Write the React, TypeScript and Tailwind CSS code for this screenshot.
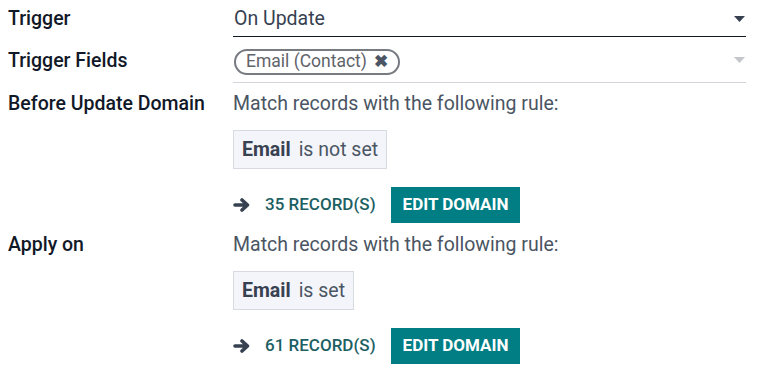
const Caret = ({ light }: { light?: boolean }) => (
  <svg width="11" height="6" viewBox="0 0 11 6" className="shrink-0">
    <path d="M0 0 L11 0 L5.5 6 Z" fill={light ? '#c4c6ca' : '#374151'} />
  </svg>
);

const BoldArrow = () => (
  <svg width="17" height="16" viewBox="0 0 17 16" className="shrink-0">
    <path
      d="M2 8 H14 M9 3 L14.5 8 L9 13"
      fill="none"
      stroke="#374151"
      strokeWidth="3.6"
      strokeLinecap="round"
      strokeLinejoin="round"
    />
  </svg>
);

const DomainBlock = ({ rule, records }: { rule: string; records: number }) => (
  <div className="flex flex-col">
    <div className="h-[28px] leading-[28px] text-[#4b5563]">Match records with the following rule:</div>
    <div className="mt-[12px] self-start flex items-center h-[39px] px-[8px] bg-[#f4f5fa] border border-[#d8dae2] text-[#4b5563]">
      <span className="font-bold text-[#374151]">Email</span>
      <span className="ml-[8px]">{rule}</span>
    </div>
    <div className="mt-[18px] flex items-center h-[36px]">
      <BoldArrow />
      <span className="ml-[15px] text-[17px] font-medium text-[#1d5f63]">{records} RECORD(S)</span>
      <button className="ml-[15px] h-[36px] px-[12px] bg-[#017e84] text-white text-[17px] font-bold">EDIT DOMAIN</button>
    </div>
  </div>
);

export default function App() {
  return (
    <div className="w-[757px] h-[378px] bg-white font-['Roboto',sans-serif] text-[19.5px] text-[#111827] overflow-hidden">
      <div className="pl-[8px] pr-[11px] pt-[2px]">
        <div className="flex">
          <div className="w-[225px] font-medium h-[34px] leading-[34px]">Trigger</div>
          <div className="flex-1 flex items-center justify-between h-[35px] border-b border-[#111827] text-[#374151] pl-[1px] pr-[1px]">
            <span>On Update</span>
            <Caret />
          </div>
        </div>
        <div className="flex mt-[1px]">
          <div className="w-[225px] font-medium h-[45px] leading-[45px]">Trigger Fields</div>
          <div className="flex-1 flex items-center justify-between h-[45px] border-b border-[#d1d5db] pr-[1px]">
            <span className="mt-[3px] ml-[1px] flex items-center h-[26px] px-[10px] rounded-full border-2 border-[#777a80] text-[#5f636a] text-[17.5px] leading-none">
              Email (Contact)
              <span className="ml-[7px] text-[#4b5563] text-[17px] font-bold">✖</span>
            </span>
            <Caret light />
          </div>
        </div>
        <div className="flex mt-[7px]">
          <div className="w-[225px] font-medium h-[28px] leading-[28px]">Before Update Domain</div>
          <DomainBlock rule="is not set" records={35} />
        </div>
        <div className="flex mt-[8px]">
          <div className="w-[225px] font-medium h-[28px] leading-[28px]">Apply on</div>
          <DomainBlock rule="is set" records={61} />
        </div>
      </div>
    </div>
  );
}
